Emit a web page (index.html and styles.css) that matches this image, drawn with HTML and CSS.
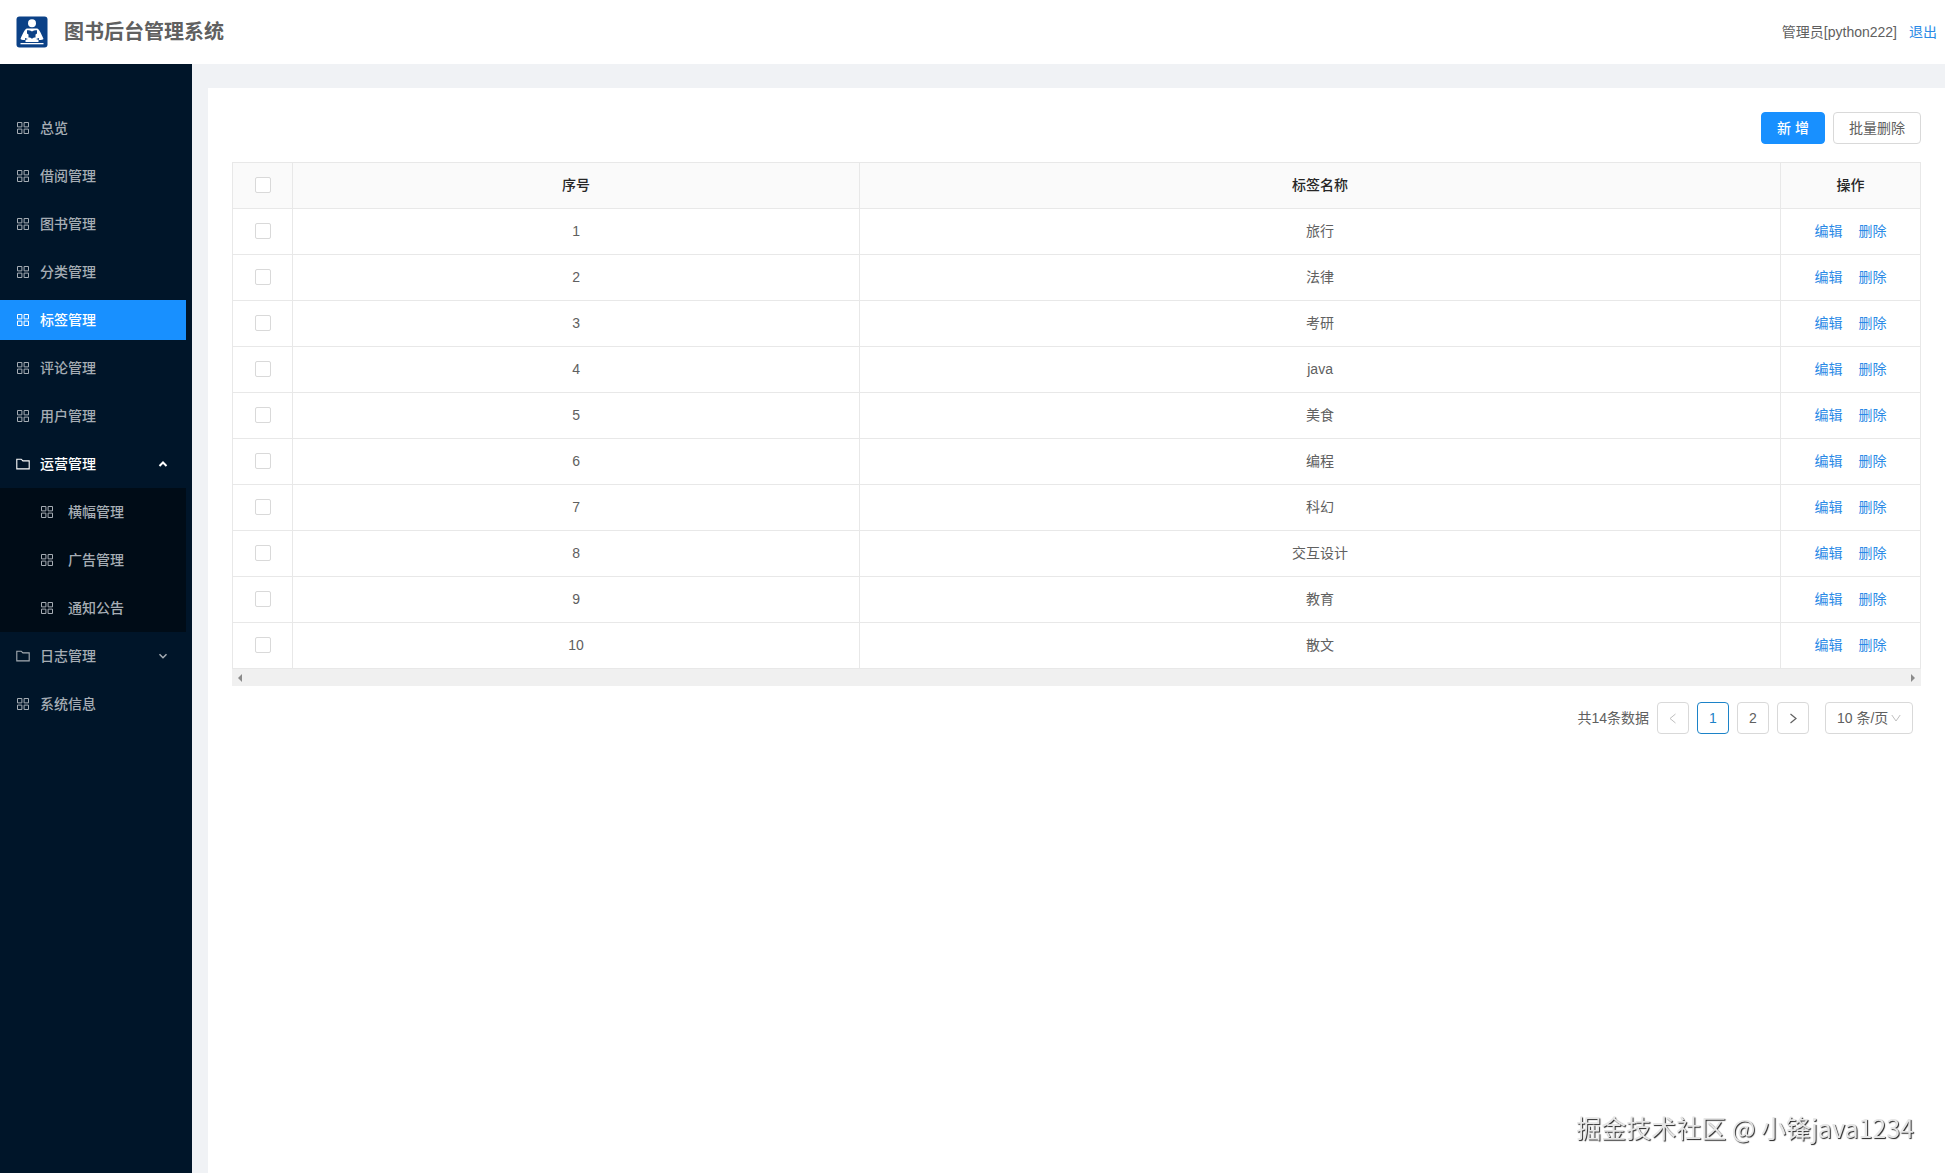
FILE: index.html
```html
<!DOCTYPE html>
<html lang="zh-CN">
<head>
<meta charset="utf-8">
<title>图书后台管理系统</title>
<link rel="stylesheet" href="styles.css">
</head>
<body>
<svg class="sprite" aria-hidden="true">
  <symbol id="grid" viewBox="0 0 14 14"><path d="M1.500 1.500h4.400v4.400H1.500zM8.100 1.500h4.400v4.400H8.100zM1.500 8.100h4.400v4.400H1.500zM8.100 8.100h4.400v4.400H8.100z" fill="none" stroke="currentColor"/></symbol>
  <symbol id="folder" viewBox="0 0 14 14"><path d="M.8 2.200h4.400l1.700 1.700h6.300v8H.8z" fill="none" stroke="currentColor" stroke-width="1.1"/></symbol>
  <symbol id="down" viewBox="0 0 10 10"><path d="M1.500 3.200L5 6.700l3.500-3.500" fill="none" stroke="currentColor" stroke-width="1.500"/></symbol>
  <symbol id="up" viewBox="0 0 10 10"><path d="M1.500 7L5 3.500 8.500 7" fill="none" stroke="currentColor" stroke-width="2"/></symbol>
</svg>
<header class="header">
  <svg class="logo" viewBox="0 0 32 32" aria-hidden="true">
    <rect x=".5" y=".5" width="31" height="31" rx="3" fill="#0b4187"/>
    <circle cx="16" cy="7.200" r="4" fill="#fff"/>
    <path d="M11 12.500h10c2.200.5 4 4.500 6.500 10.500-1 .8-2.500 1.200-5 1v2h-13v-2c-2.500.2-4 0-5-1C7 17 8.800 13 11 12.500z" fill="#fff"/>
    <path d="M11 14.200c2.300 0 4 .4 5 1.300 1-.9 2.700-1.300 5-1.300v3.300l-1.500 1v3c-1.500 0-2.700.4-3.500 1.300-.8-.9-2-1.300-3.500-1.300v-3l-1.500-1z" fill="#0b4187"/>
    <path d="M9 22l3 1-3 1zM23 22l-3 1 3 1z" fill="#0b4187"/>
    <path d="M4.500 27h23v1.300h-23z" fill="#fff"/>
  </svg>
  <h1 class="title">图书后台管理系统</h1>
  <span class="user">管理员[python222]</span>
  <a class="link" href="#logout">退出</a>
</header>
<div class="layout">
  <nav class="sider">
    <ul class="menu">
      <li><a class="item" href="#overview"><svg class="icon"><use href="#grid"/></svg>总览</a></li>
      <li><a class="item" href="#loan"><svg class="icon"><use href="#grid"/></svg>借阅管理</a></li>
      <li><a class="item" href="#book"><svg class="icon"><use href="#grid"/></svg>图书管理</a></li>
      <li><a class="item" href="#category"><svg class="icon"><use href="#grid"/></svg>分类管理</a></li>
      <li><a class="item active" href="#tag" aria-current="page"><svg class="icon"><use href="#grid"/></svg>标签管理</a></li>
      <li><a class="item" href="#comment"><svg class="icon"><use href="#grid"/></svg>评论管理</a></li>
      <li><a class="item" href="#users"><svg class="icon"><use href="#grid"/></svg>用户管理</a></li>
      <li>
        <button class="item open" type="button" aria-expanded="true"><svg class="icon"><use href="#folder"/></svg>运营管理<svg class="caret"><use href="#up"/></svg></button>
        <ul class="submenu">
          <li><a class="item" href="#banner"><svg class="icon"><use href="#grid"/></svg>横幅管理</a></li>
          <li><a class="item" href="#ad"><svg class="icon"><use href="#grid"/></svg>广告管理</a></li>
          <li><a class="item" href="#notice"><svg class="icon"><use href="#grid"/></svg>通知公告</a></li>
        </ul>
      </li>
      <li><button class="item" type="button" aria-expanded="false"><svg class="icon"><use href="#folder"/></svg>日志管理<svg class="caret"><use href="#down"/></svg></button></li>
      <li><a class="item" href="#system"><svg class="icon"><use href="#grid"/></svg>系统信息</a></li>
    </ul>
  </nav>
  <main class="content">
    <div class="toolbar">
      <button class="btn primary" type="button">新 增</button>
      <button class="btn" type="button">批量删除</button>
    </div>
    <table class="table">
      <colgroup><col class="col-check"><col class="col-index"><col><col class="col-action"></colgroup>
      <thead>
        <tr><th><input class="check" type="checkbox" aria-label="全选"></th><th>序号</th><th>标签名称</th><th>操作</th></tr>
      </thead>
      <tbody>
        <tr><td><input class="check" type="checkbox" aria-label="选择 1"></td><td>1</td><td>旅行</td><td><a class="link" href="#edit">编辑</a><a class="link" href="#delete">删除</a></td></tr>
        <tr><td><input class="check" type="checkbox" aria-label="选择 2"></td><td>2</td><td>法律</td><td><a class="link" href="#edit">编辑</a><a class="link" href="#delete">删除</a></td></tr>
        <tr><td><input class="check" type="checkbox" aria-label="选择 3"></td><td>3</td><td>考研</td><td><a class="link" href="#edit">编辑</a><a class="link" href="#delete">删除</a></td></tr>
        <tr><td><input class="check" type="checkbox" aria-label="选择 4"></td><td>4</td><td>java</td><td><a class="link" href="#edit">编辑</a><a class="link" href="#delete">删除</a></td></tr>
        <tr><td><input class="check" type="checkbox" aria-label="选择 5"></td><td>5</td><td>美食</td><td><a class="link" href="#edit">编辑</a><a class="link" href="#delete">删除</a></td></tr>
        <tr><td><input class="check" type="checkbox" aria-label="选择 6"></td><td>6</td><td>编程</td><td><a class="link" href="#edit">编辑</a><a class="link" href="#delete">删除</a></td></tr>
        <tr><td><input class="check" type="checkbox" aria-label="选择 7"></td><td>7</td><td>科幻</td><td><a class="link" href="#edit">编辑</a><a class="link" href="#delete">删除</a></td></tr>
        <tr><td><input class="check" type="checkbox" aria-label="选择 8"></td><td>8</td><td>交互设计</td><td><a class="link" href="#edit">编辑</a><a class="link" href="#delete">删除</a></td></tr>
        <tr><td><input class="check" type="checkbox" aria-label="选择 9"></td><td>9</td><td>教育</td><td><a class="link" href="#edit">编辑</a><a class="link" href="#delete">删除</a></td></tr>
        <tr><td><input class="check" type="checkbox" aria-label="选择 10"></td><td>10</td><td>散文</td><td><a class="link" href="#edit">编辑</a><a class="link" href="#delete">删除</a></td></tr>
      </tbody>
    </table>
    <div class="scrollbar" aria-hidden="true">
      <svg width="4" height="8" viewBox="0 0 4 8"><path d="M4 0v8L0 4z" fill="#8b8b8b"/></svg>
      <svg width="4" height="8" viewBox="0 0 4 8"><path d="M0 0v8l4-4z" fill="#8b8b8b"/></svg>
    </div>
    <div class="pager">
      <span>共14条数据</span>
      <button class="page" type="button" disabled aria-label="上一页"><svg width="12" height="12" viewBox="0 0 12 12"><path d="M8.500 2L3 6.500 8.500 11" fill="none" stroke="currentColor"/></svg></button>
      <button class="page current" type="button">1</button>
      <button class="page" type="button">2</button>
      <button class="page" type="button" aria-label="下一页"><svg width="12" height="12" viewBox="0 0 12 12"><path d="M3.500 2L9 6.500 3.500 11" fill="none" stroke="currentColor" stroke-width="1.2"/></svg></button>
      <div class="size">
        <select aria-label="每页条数"><option>10 条/页</option><option>20 条/页</option></select>
        <svg width="10" height="10" viewBox="0 0 10 10" aria-hidden="true"><path d="M.8 2L5 8l4.200-6" fill="none" stroke="#bfbfbf"/></svg>
      </div>
    </div>
  </main>
</div>
<div class="watermark">掘金技术社区 @ 小锋java1234</div>
</body>
</html>
```
FILE: styles.css
```css
* { box-sizing: border-box; }

body {
  margin: 0;
  min-height: 100vh;
  display: flex;
  flex-direction: column;
  background: #f0f2f5;
  color: #606060;
  font: 14px/22px "Liberation Sans", "Noto Sans CJK SC", sans-serif;
}

button, select { font: inherit; color: inherit; }
ul { list-style: none; margin: 0; padding: 0; }
.sprite { display: none; }
.link { color: #2a8ae6; text-decoration: none; }

.header {
  display: flex;
  align-items: center;
  height: 64px;
  padding: 0 8px 0 16px;
  background: #fff;
}
.logo { width: 32px; height: 32px; }
.title {
  margin: 0 auto 0 16px;
  font-size: 20px;
  line-height: 32px;
  font-weight: 700;
}
.user { margin-right: 12px; }

.layout { flex: 1; display: flex; }
.sider {
  flex: 0 0 192px;
  padding: 40px 6px 0 0;
  background: #001529;
}
.item {
  display: flex;
  align-items: center;
  width: 100%;
  height: 40px;
  margin: 4px 0;
  padding: 0 18px 0 16px;
  border: 0;
  background: none;
  color: #a6adb4;
  font-weight: 500;
  text-decoration: none;
}
.menu, .menu > li, .submenu, .submenu li { display: flow-root; }
.icon { width: 14px; height: 14px; margin-right: 10px; }
.caret { width: 10px; height: 10px; margin-left: auto; }
.active { background: #1890ff; color: #fff; }
.open { color: #fff; }
.submenu { background: #000c17; }
.submenu .item { padding-left: 40px; }
.submenu .icon { margin-right: 14px; }

.content {
  flex: 1;
  min-width: 0;
  margin: 24px 0 0 16px;
  padding: 24px;
  background: #fff;
}
.toolbar {
  display: flex;
  justify-content: flex-end;
  gap: 8px;
  margin-bottom: 18px;
}
.btn {
  height: 32px;
  padding: 0 15px;
  border: 1px solid #d9d9d9;
  border-radius: 4px;
  background: #fff;
}
.primary { border-color: #1890ff; background: #1890ff; color: #fff; font-weight: 500; }

.table {
  width: 100%;
  table-layout: fixed;
  border-collapse: collapse;
  text-align: center;
}
.col-check { width: 60px; }
.col-index { width: 33.6%; }
.col-action { width: 140px; }
.table th, .table td {
  height: 46px;
  padding: 0 0 2px;
  border: 1px solid #e8e8e8;
}
.table th { background: #fafafa; color: #262626; font-weight: 500; }
.table .link + .link { margin-left: 16px; }
.check {
  appearance: none;
  display: block;
  width: 16px;
  height: 16px;
  margin: 0 auto;
  border: 1px solid #d9d9d9;
  border-radius: 2px;
  background: #fff;
}

.scrollbar {
  display: flex;
  align-items: center;
  justify-content: space-between;
  height: 17px;
  padding: 0 6px;
  background: #f0f0f0;
}

.pager {
  display: flex;
  align-items: center;
  justify-content: flex-end;
  gap: 8px;
  margin-top: 16px;
  padding-right: 8px;
}
.page {
  display: grid;
  place-items: center;
  width: 32px;
  height: 32px;
  padding: 0;
  border: 1px solid #d9d9d9;
  border-radius: 4px;
  background: #fff;
}
.page:disabled { color: #bfbfbf; }
.current { border-color: #1c83c8; color: #1c83c8; }
.size {
  display: grid;
  align-items: center;
  width: 88px;
  margin-left: 8px;
}
.size select {
  grid-area: 1 / 1;
  appearance: none;
  width: 100%;
  height: 32px;
  padding: 0 11px;
  border: 1px solid #d9d9d9;
  border-radius: 4px;
  background: #fff;
}
.size svg {
  grid-area: 1 / 1;
  justify-self: end;
  margin-right: 12px;
  pointer-events: none;
}

.watermark {
  position: fixed;
  right: 31px;
  bottom: 28px;
  color: #e6e6e6;
  font: 25px/36px "Noto Sans CJK SC", sans-serif;
  text-shadow: 1px 1px 1px #222;
}
```
